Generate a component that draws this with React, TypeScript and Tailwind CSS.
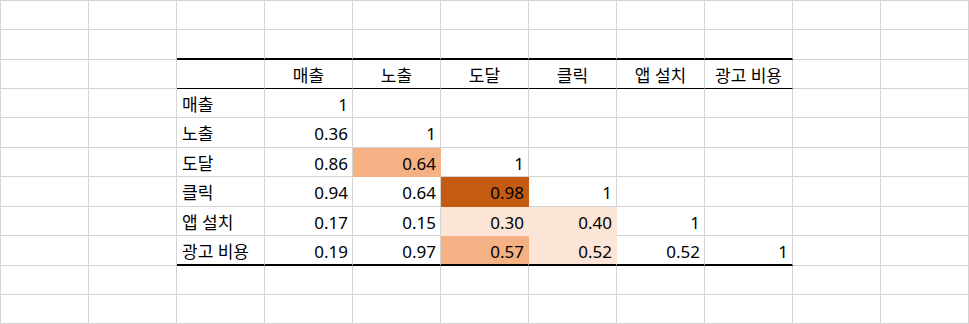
const labels = ["매출", "노출", "도달", "클릭", "앱 설치", "광고 비용"];

// lower-triangle correlation values, shown as text
const values: string[][] = [
  ["1"],
  ["0.36", "1"],
  ["0.86", "0.64", "1"],
  ["0.94", "0.64", "0.98", "1"],
  ["0.17", "0.15", "0.30", "0.40", "1"],
  ["0.19", "0.97", "0.57", "0.52", "0.52", "1"],
];

// fill per cell: "" none, "l" light, "m" mid, "d" dark
const fills: string[][] = [
  [""],
  ["", ""],
  ["", "m", ""],
  ["", "", "d", ""],
  ["", "", "l", "l", ""],
  ["", "", "m", "l", "", ""],
];

const ROWS = 11;
const COLS = 11;

function Cell({ r, c }: { r: number; c: number }) {
  const inTableCols = c >= 2 && c <= 8;
  let text = "";
  let align = "justify-end pr-[4px]";
  let fill = "";

  // bottom border of the cell
  let bottom = "border-b border-b-[#d4d4d4]";
  if (inTableCols && r === 1) bottom = "border-b-2 border-b-black";
  if (inTableCols && r === 2) bottom = "border-b border-b-black";
  if (inTableCols && r === 8) bottom = "border-b-2 border-b-black";

  let right = "border-r border-r-[#d4d4d4]";

  if (inTableCols && r === 2 && c > 2) {
    text = labels[c - 3];
    align = "justify-center";
  }
  if (inTableCols && r >= 3 && r <= 8) {
    const ri = r - 3;
    if (c === 2) {
      text = labels[ri];
      align = "justify-start pl-[5px]";
    } else {
      const ci = c - 3;
      if (ci < values[ri].length) {
        text = values[ri][ci];
        const f = fills[ri][ci];
        if (f === "l") {
          fill = "bg-[#fce4d6]";
          right = "border-r border-r-[#fce4d6]";
          if (r !== 8) bottom = "border-b border-b-[#fce4d6]";
        } else if (f === "m") {
          fill = "bg-[#f4b183]";
          right = "border-r border-r-[#f4b183]";
          if (r !== 8) bottom = "border-b border-b-[#f4b183]";
        } else if (f === "d") {
          fill = "bg-[#c55a11]";
          right = "border-r border-r-[#c55a11]";
          if (r !== 8) bottom = "border-b border-b-[#c55a11]";
        }
      }
    }
  }

  return (
    <div className={`flex items-center pt-[2px] ${align} ${fill} ${right} ${bottom} text-[17px] leading-none text-black whitespace-nowrap`}>
      {text}
    </div>
  );
}

export default function App() {
  const cells = [];
  for (let r = 0; r < ROWS; r++) {
    for (let c = 0; c < COLS; c++) {
      cells.push(<Cell key={`${r}-${c}`} r={r} c={c} />);
    }
  }
  return (
    <div className="w-[969px] h-[324px] overflow-hidden bg-white" style={{ fontFamily: '"Noto Sans", "Noto Sans CJK KR", sans-serif' }}>
      <div className="grid grid-cols-[repeat(11,88px)] grid-rows-[29px_30px_29px_29px_30px_29px_30px_29px_30px_29px_29px] border-l border-t border-[#d4d4d4] w-[969px]">
        {cells}
      </div>
    </div>
  );
}
